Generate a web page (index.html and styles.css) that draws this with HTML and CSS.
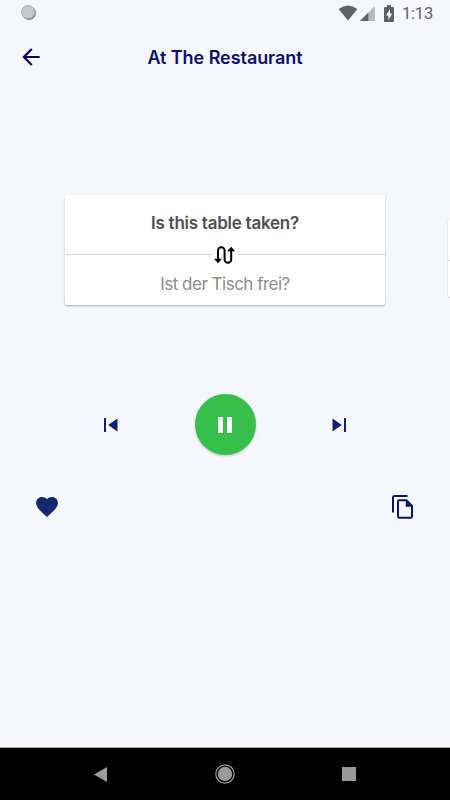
FILE: index.html
```html
<!DOCTYPE html>
<html lang="en">
<head>
<meta charset="utf-8">
<title>At The Restaurant</title>
<link rel="stylesheet" href="styles.css">
</head>
<body>
<div class="screen">
  <div class="status">
    <span class="dot"></span>
    <svg class="wifi" viewBox="0 0 20 16"><path d="M.6 4Q10-3 19.4 4L10 15.4Z"/></svg>
    <svg class="signal" viewBox="0 0 15 15"><path class="faint" d="M0 15 15 0V15Z"/><path d="M0 15 8.3 6.7V15Z"/></svg>
    <svg class="battery" viewBox="0 0 10 17"><path d="M3 0h4v2h2q1 0 1 1v13q0 1-1 1H1q-1 0-1-1V3q0-1 1-1h2z"/><path class="bolt" d="M6 4 2 10.5h2.4V15L8.2 8.500H6z"/></svg>
    <span class="clock">1:13</span>
  </div>
  <header class="appbar">
    <svg class="back" viewBox="0 0 24 24"><path d="M20 11H7.830l5.590-5.590L12 4l-8 8 8 8 1.410-1.410L7.830 13H20z"/></svg>
    <h1 class="title">At The Restaurant</h1>
  </header>
  <main class="carousel">
    <section class="card">
      <p class="phrase">Is this table taken?</p>
      <div class="divider">
        <svg class="swap" viewBox="0 0 22 18"><path class="line" d="M4 14V4.500a3.300 3.300 0 0 1 6.600 0V13.500a3.300 3.300 0 0 0 6.600 0V4"/><path d="M0 12.800h8L4 17.300zM13.200 5.200h8L17.200 .7z"/></svg>
      </div>
      <p class="translation">Ist der Tisch frei?</p>
    </section>
    <section class="card next"><div class="divider"></div></section>
  </main>
  <div class="controls">
    <svg class="skip" viewBox="0 0 14 14"><path d="M0 0h2v14H0zM4.200 7 13.500.5v13z"/></svg>
    <button class="play" aria-label="Pause"><svg class="pause" viewBox="0 0 14 16"><path d="M0 0h5v16H0zM9 0h5v16H9z"/></svg></button>
    <svg class="skip" viewBox="0 0 14 14"><path d="M12 0h2v14h-2zM9.800 7 .5.5v13z"/></svg>
  </div>
  <div class="actions">
    <svg class="heart" viewBox="2 3 20 18.350"><path d="m12 21.350-1.450-1.320C5.400 15.360 2 12.280 2 8.500 2 5.420 4.420 3 7.500 3c1.740 0 3.410.81 4.500 2.090C13.090 3.810 14.760 3 16.500 3 19.580 3 22 5.420 22 8.500c0 3.780-3.400 6.860-8.550 11.540z"/></svg>
    <svg class="copy" viewBox="0 0 21 24"><path class="line" d="M1 17.500V2.500Q1 1 2.500 1H15.500M6 6.500Q6 5.300 7.200 5.300H14.500L20 10.800V21.500Q20 22.800 18.700 22.800H7.200Q6 22.800 6 21.500Z"/><path d="M13.800 5 20 11.800H13.800Z"/></svg>
  </div>
  <nav class="navbar">
    <svg class="nav-back" viewBox="0 0 13 15"><path d="M0 7.500 13 0v15z"/></svg>
    <svg class="nav-home" viewBox="0 0 20 20"><circle class="ring" cx="10" cy="10" r="9.200"/><circle cx="10" cy="10" r="7.200"/></svg>
    <span class="nav-recent"></span>
  </nav>
</div>
</body>
</html>
```
FILE: styles.css
```css
* { box-sizing: border-box; }
body { margin: 0; background: #f5f7fc; font-family: Inter, "Liberation Sans", sans-serif; }
svg { display: block; flex: none; fill: currentColor; }
.screen { width: 450px; height: 800px; overflow: hidden; display: flex; flex-direction: column; color: #0b1664; }
.status { height: 27px; padding: 5px 18px 0 21px; display: flex; color: #606163; }
.dot { width: 14px; height: 14px; border-radius: 50%; background: #c6c7ca; border: 1px dotted #a0a1a3; box-shadow: 1px 1px 0 #888; margin-right: auto; }
.wifi { width: 20px; height: 16px; margin-right: 2px; }
.signal { width: 15px; height: 15px; margin: 1px 9px 0 0; }
.faint { fill: #babbc0; }
.battery { width: 10px; height: 17px; margin-right: 8px; }
.bolt { fill: #f5f7fc; }
.clock { font: 400 16.5px/18px Roboto, sans-serif; letter-spacing: -.2px; width: 30px; white-space: nowrap; }
.appbar { height: 60px; padding: 0 18px; display: grid; grid-template-columns: 26px 1fr 26px; align-items: center; color: #08085f; }
.back { width: 26px; height: 26px; }
.title { margin: 0; padding-top: 1px; font-size: 18px; line-height: 24px; font-weight: 600; letter-spacing: -.06px; text-align: center; white-space: nowrap; color: #0b1070; }
.carousel { height: 307px; padding: 108px 0 0 65px; display: flex; gap: 63px; }
.card { width: 320px; height: 110px; flex: none; background: #fff; border-radius: 2px; box-shadow: 0 1px 2px rgba(0,0,0,.3); display: flex; flex-direction: column; text-align: center; }
.card p { margin: 0; white-space: nowrap; }
.phrase { height: 59px; padding-top: 16px; font-size: 17px; line-height: 24px; font-weight: 600; letter-spacing: -.25px; color: #505052; }
.divider { height: 1px; display: flex; align-items: center; gap: 2px; }
.divider::before, .divider::after { content: ""; flex: 1; height: 1px; background: #d6d6d8; }
.swap { width: 22px; height: 18px; color: #000; }
.line { fill: none; stroke: currentColor; stroke-width: 2; }
.translation { padding-top: 17px; font-size: 17px; line-height: 24px; letter-spacing: -.5px; color: #8c8c8e; }
.next { height: 77px; margin-top: 25px; padding-top: 40px; box-shadow: 0 1px 2px rgba(0,0,0,.2); }
.next .divider { gap: 0; }
.controls { height: 61px; padding: 0 104px; display: flex; align-items: center; justify-content: space-between; color: #10206c; }
.skip { width: 14px; height: 14px; }
.play { width: 61px; height: 61px; padding: 0; border: 0; border-radius: 50%; background: #36bf4a; color: #fff; display: grid; place-items: center; box-shadow: 0 1px 3px rgba(0,0,0,.22); }
.pause { width: 14px; height: 16px; }
.actions { height: 292px; padding: 40px 37px 0 36px; display: flex; justify-content: space-between; }
.heart { width: 22px; height: 20px; margin-top: 2px; color: #14296f; }
.copy { width: 21px; height: 24px; }
.navbar { height: 53px; background: #000; border-top: 1px solid #aaa; color: #9a9a9a; padding: 0 94px; display: flex; align-items: center; justify-content: space-between; }
.nav-back { width: 13px; height: 15px; }
.nav-home { width: 20px; height: 20px; }
.ring { fill: none; stroke: currentColor; stroke-width: 1.200; }
.nav-recent { width: 14px; height: 14px; background: #9a9a9a; }
```
